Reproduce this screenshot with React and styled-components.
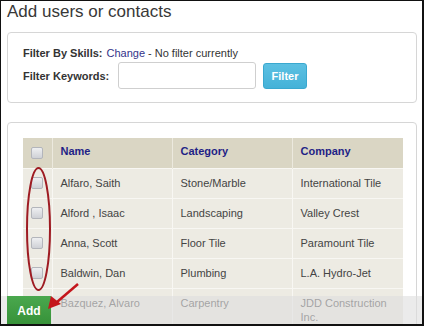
import React from "react";
import styled, { createGlobalStyle } from "styled-components";

const Global = createGlobalStyle`
  html, body { margin: 0; padding: 0; background: #fff; }
  body { font-family: "Liberation Sans", Arial, sans-serif; }
  * { box-sizing: border-box; }
`;

const Frame = styled.div`
  position: relative;
  width: 424px;
  height: 326px;
  overflow: hidden;
  background: #fff;
  border-top: 1px solid #111;
  border-left: 1px solid #111;
  border-right: 2px solid #111;
  border-bottom: 2px solid #111;
  font-family: "Liberation Sans", Arial, sans-serif;
`;

const Title = styled.h1`
  margin: 0 0 9px;
  padding: 0 6px;
  font-size: 17px;
  line-height: 22px;
  font-weight: normal;
  color: #383838;
`;

const Panel = styled.div`
  margin: ${(p) => p.$mt || 0}px 5px 0 6px;
  border: 1px solid #d6d6d6;
  border-radius: 4px;
  padding: ${(p) => p.$pad};
`;

const FilterRow = styled.div`
  display: flex;
  align-items: center;
  font-size: 11px;
  color: #333;
  line-height: 16px;
  margin-bottom: ${(p) => p.$mb || 0}px;
`;

const Label = styled.span`
  font-weight: bold;
  width: ${(p) => (p.$w ? p.$w + "px" : "auto")};
  margin-right: ${(p) => p.$mr || 0}px;
`;

const Link = styled.a`
  color: #33338a;
  text-decoration: none;
  margin-right: 3px;
`;

const Input = styled.input`
  width: 138px;
  height: 27px;
  border: 1px solid #cfcfcf;
  border-radius: 3px;
  margin: 0 7px 0 0;
  padding: 0 6px;
  background: #fff;
`;

const FilterButton = styled.button`
  width: 44px;
  height: 26px;
  border: 1px solid #3aa8cf;
  border-radius: 3px;
  background: linear-gradient(#5cc0e2, #45b2d8);
  color: #fff;
  font-family: "Liberation Sans", Arial, sans-serif;
  font-weight: bold;
  font-size: 11px;
  padding: 0;
`;

const Table = styled.table`
  width: 380px;
  border-collapse: collapse;
  table-layout: fixed;
  font-size: 11px;
  line-height: 14px;
`;

const Row = styled.tr`
  height: 30px;
`;

const Th = styled.th`
  background: #dad6c4;
  color: #1f1f86;
  font-weight: bold;
  text-align: left;
  vertical-align: top;
  padding: 6px 8px 0;
  border-left: 1px solid #ece9de;
  &:first-child { border-left: none; padding: 8px 0 0 8px; }
`;

const Td = styled.td`
  background: #edebe3;
  color: #444;
  vertical-align: top;
  padding: 7px 8px 0;
  border-left: 1px solid #f8f7f3;
  border-top: 1px solid #f8f7f3;
  &:first-child { border-left: none; padding: 7px 0 0 8px; }
`;

const Check = styled.span`
  display: block;
  width: 12px;
  height: 12px;
  border: 1px solid #b3b5bb;
  border-radius: 2px;
  background: linear-gradient(#eeeff1, #cfd1d6);
  margin-top: 1px;
`;

const Footer = styled.div`
  position: absolute;
  left: 0;
  right: 0;
  bottom: 0;
  height: 28px;
  background: rgba(222, 222, 222, 0.62);
  padding-left: 6px;
  display: flex;
`;

const AddButton = styled.button`
  width: 44px;
  height: 28px;
  border: none;
  background: linear-gradient(#4aa84e, #379239);
  color: #fff;
  font-family: "Liberation Sans", Arial, sans-serif;
  font-weight: bold;
  font-size: 12px;
  padding: 2px 0 0;
`;

const Annotation = styled.svg`
  position: absolute;
  left: 0;
  top: 0;
  pointer-events: none;
`;

const rows = [
  ["Alfaro, Saith", "Stone/Marble", "International Tile"],
  ["Alford , Isaac", "Landscaping", "Valley Crest"],
  ["Anna, Scott", "Floor Tile", "Paramount Tile"],
  ["Baldwin, Dan", "Plumbing", "L.A. Hydro-Jet"],
  ["Bazquez, Alvaro", "Carpentry", "JDD Construction Inc."],
];

export default function App() {
  return (
    <>
      <Global />
      <Frame>
        <Title>Add users or contacts</Title>
        <Panel $pad="12px 14px 13px 15px">
          <FilterRow $mb={1}>
            <Label $mr={4}>Filter By Skills:</Label>
            <Link href="#">Change</Link>
            <span>- No filter currently</span>
          </FilterRow>
          <FilterRow>
            <Label $w={95}>Filter Keywords:</Label>
            <Input type="text" />
            <FilterButton>Filter</FilterButton>
          </FilterRow>
        </Panel>
        <Panel $mt={19} $pad="15px 12px 40px 15px">
          <Table>
            <colgroup>
              <col style={{ width: 29 }} />
              <col style={{ width: 120 }} />
              <col style={{ width: 120 }} />
              <col style={{ width: 111 }} />
            </colgroup>
            <thead>
              <Row>
                <Th><Check /></Th>
                <Th>Name</Th>
                <Th>Category</Th>
                <Th>Company</Th>
              </Row>
            </thead>
            <tbody>
              {rows.map((r) => (
                <Row key={r[0]}>
                  <Td><Check /></Td>
                  <Td>{r[0]}</Td>
                  <Td>{r[1]}</Td>
                  <Td>{r[2]}</Td>
                </Row>
              ))}
            </tbody>
          </Table>
        </Panel>
        <Footer>
          <AddButton>Add</AddButton>
        </Footer>
        <Annotation width="424" height="326" viewBox="0 0 424 326">
          <ellipse cx="37.5" cy="228" rx="11.5" ry="61" fill="none" stroke="#9e1b22" strokeWidth="2" />
          <line x1="77" y1="283" x2="56" y2="301" stroke="#c4161c" strokeWidth="2.5" />
          <polygon points="47,308 50,295 60,303" fill="#c4161c" />
        </Annotation>
      </Frame>
    </>
  );
}
